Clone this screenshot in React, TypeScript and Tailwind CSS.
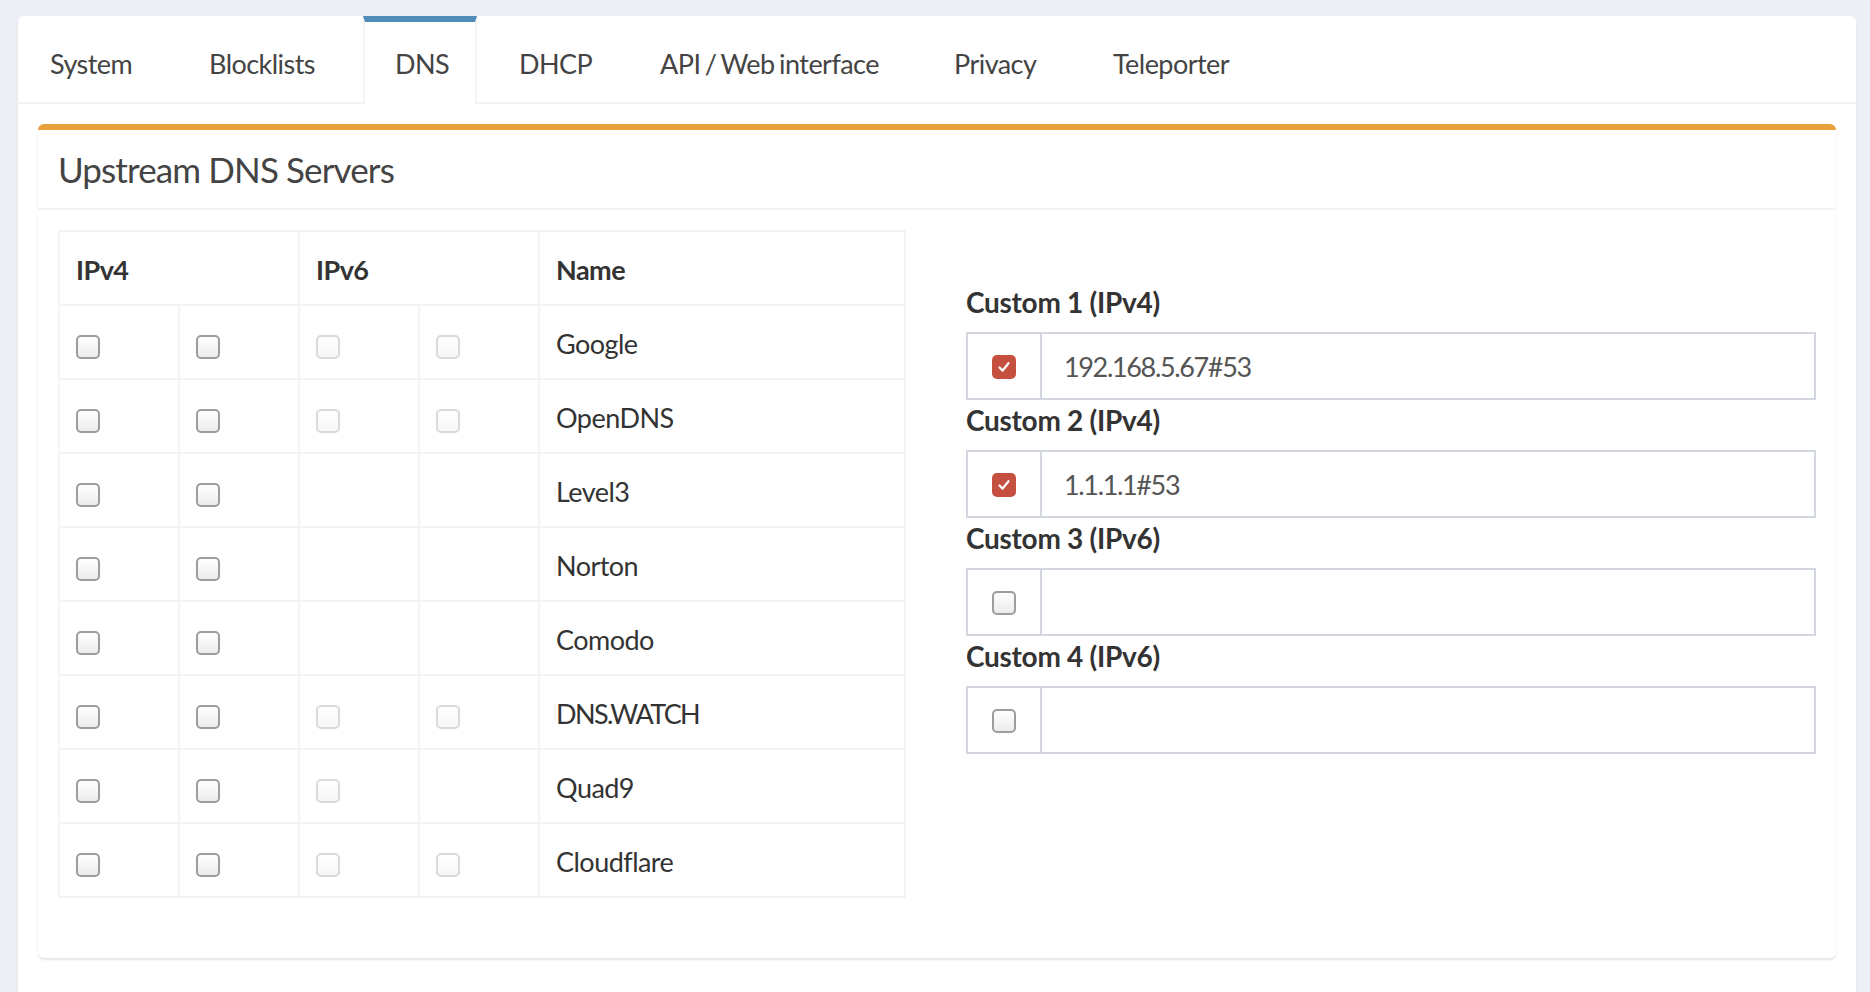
import React from "react";

type Row = { name: string; v6: number };

const rows: Row[] = [
  { name: "Google", v6: 2 },
  { name: "OpenDNS", v6: 2 },
  { name: "Level3", v6: 0 },
  { name: "Norton", v6: 0 },
  { name: "Comodo", v6: 0 },
  { name: "DNS.WATCH", v6: 2 },
  { name: "Quad9", v6: 1 },
  { name: "Cloudflare", v6: 2 },
];

const tabs = [
  { label: "System", w: "w-[149px]" },
  { label: "Blocklists", w: "w-[176px]" },
  { label: "DNS", w: "w-[114px]", active: true },
  { label: "DHCP", w: "w-[131px]" },
  { label: "API / Web interface", w: "w-[284px]" },
  { label: "Privacy", w: "w-[149px]" },
  { label: "Teleporter", w: "w-[185px]" },
];

const customs = [
  { label: "Custom 1 (IPv4)", value: "192.168.5.67#53", checked: true },
  { label: "Custom 2 (IPv4)", value: "1.1.1.1#53", checked: true },
  { label: "Custom 3 (IPv6)", value: "", checked: false },
  { label: "Custom 4 (IPv6)", value: "", checked: false },
];

function Box({ disabled, checked }: { disabled?: boolean; checked?: boolean }) {
  if (checked) {
    return (
      <span className="flex w-[24px] h-[24px] rounded-[5px] bg-[#c5503f] items-center justify-center">
        <svg width="16" height="16" viewBox="0 0 16 16" fill="none">
          <path d="M3.5 8.5 L6.6 11.6 L12.5 4.2" stroke="white" strokeWidth="2.2" strokeLinecap="round" strokeLinejoin="round" />
        </svg>
      </span>
    );
  }
  return (
    <span
      className={
        disabled
          ? "block w-[24px] h-[24px] rounded-[5px] border-2 border-[#dadada] bg-gradient-to-b from-white to-[#f6f6f6]"
          : "block w-[24px] h-[24px] rounded-[5px] border-2 border-[#9d9d9d] bg-gradient-to-b from-white to-[#ececec]"
      }
    />
  );
}

function Cell({ children }: { children?: React.ReactNode }) {
  return (
    <td className="border-2 border-[#f4f4f4] px-[16px] pt-[4px] h-[74px] align-middle">
      {children}
    </td>
  );
}

export default function App() {
  return (
    <div className="min-h-screen bg-[#ecf0f5] pt-[16px] pl-[18px] pr-[14px] font-['Lato',sans-serif] overflow-hidden">
      <div className="bg-white rounded-t-[6px] shadow-[0_2px_2px_rgba(0,0,0,0.1)] min-h-[980px]">
        {/* tabs */}
        <div className="flex border-b-2 border-[#f4f4f4]">
          {tabs.map((t) => (
            <div
              key={t.label}
              className={
                t.active
                  ? `${t.w} mr-[10px] -mb-[2px] h-[88px] flex items-center pl-[30px] border-t-[6px] border-t-[#508cba] border-x-2 border-x-[#f4f4f4] bg-white text-[27px] text-[#444] whitespace-nowrap tracking-[-0.02em] [word-spacing:-2px]`
                  : `${t.w} h-[86px] mr-[10px] flex items-center pl-[30px] border-t-[6px] border-t-transparent border-x-2 border-x-transparent text-[27px] text-[#444] whitespace-nowrap tracking-[-0.02em] [word-spacing:-2px]`
              }
            >
              <span className={t.active ? "pt-[2px]" : "pt-[4px]"}>{t.label}</span>
            </div>
          ))}
        </div>

        <div className="p-[20px]">
          <div className="bg-white rounded-[6px] border-t-[6px] border-[#e9a23b] shadow-[0_2px_2px_rgba(0,0,0,0.1)]">
            <div className="h-[80px] px-[20px] flex items-center border-b-2 border-[#f4f4f4]">
              <h3 className="text-[35px] text-[#444] leading-none tracking-[-0.025em]">Upstream DNS Servers</h3>
            </div>
            <div className="p-[20px] flex gap-[60px]">
              {/* server table */}
              <div className="w-[848px] shrink-0 pb-[40px]">
                <table className="w-[848px] border-collapse table-fixed text-[27px] text-[#333] tracking-[-0.02em]">
                  <colgroup>
                    <col className="w-[120px]" />
                    <col className="w-[120px]" />
                    <col className="w-[120px]" />
                    <col className="w-[120px]" />
                    <col />
                  </colgroup>
                  <thead>
                    <tr>
                      <th colSpan={2} className="border-2 border-[#f4f4f4] px-[16px] pt-[4px] h-[74px] text-left font-bold">IPv4</th>
                      <th colSpan={2} className="border-2 border-[#f4f4f4] px-[16px] pt-[4px] h-[74px] text-left font-bold">IPv6</th>
                      <th className="border-2 border-[#f4f4f4] px-[16px] pt-[4px] h-[74px] text-left font-bold">Name</th>
                    </tr>
                  </thead>
                  <tbody>
                    {rows.map((r) => (
                      <tr key={r.name}>
                        <Cell><div className="pt-[5px]"><Box /></div></Cell>
                        <Cell><div className="pt-[5px]"><Box /></div></Cell>
                        <Cell>{r.v6 >= 1 && <div className="pt-[5px]"><Box disabled /></div>}</Cell>
                        <Cell>{r.v6 >= 2 && <div className="pt-[5px]"><Box disabled /></div>}</Cell>
                        <Cell>
                          <span className={r.name === "DNS.WATCH" ? "tracking-[-0.06em]" : ""}>{r.name}</span>
                        </Cell>
                      </tr>
                    ))}
                  </tbody>
                </table>
              </div>

              {/* custom servers */}
              <div className="flex-1 pt-[52px]">
                {customs.map((c) => (
                  <div key={c.label}>
                    <div className="text-[28px] font-bold text-[#333] leading-[40px] mb-[10px] tracking-[-0.01em]">{c.label}</div>
                    <div className="flex h-[68px]">
                      <div className="w-[76px] shrink-0 border-2 border-[#d2d6de] flex items-center justify-center pt-[2px]">
                        <Box checked={c.checked} />
                      </div>
                      <div className="flex-1 border-2 border-l-0 border-[#d2d6de] flex items-center px-[22px] pt-[2px] text-[27px] text-[#555] tracking-[-0.05em]">
                        {c.value}
                      </div>
                    </div>
                  </div>
                ))}
              </div>
            </div>
          </div>
        </div>
      </div>
    </div>
  );
}
